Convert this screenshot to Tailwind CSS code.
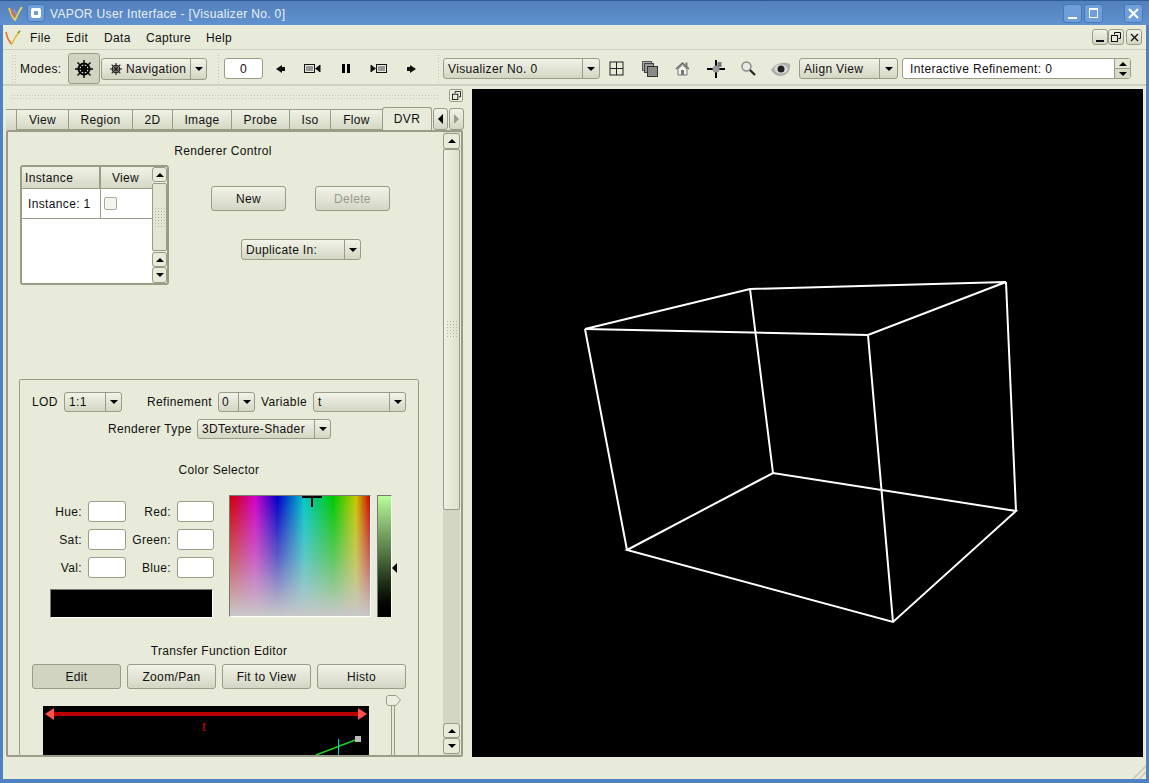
<!DOCTYPE html>
<html lang="en">
<head>
  <meta charset="utf-8" />
  <meta name="viewport" content="width=device-width, initial-scale=1" />
  <title>VAPOR User Interface</title>
  <script src="https://cdn.jsdelivr.net/npm/@tailwindcss/browser@4"></script>
</head>
<body class="bg-[#5a8cc6]">
<div class="w-[1149px] h-[783px] flex flex-col overflow-hidden font-['Liberation_Sans',Arial,sans-serif] text-[12px] leading-[14px] tracking-[0.35px] text-[#111] bg-[#4f82c2]">

  <!-- title bar -->
  <div class="h-[25px] shrink-0 flex items-center pl-[8px] pr-[6px] border-t border-[#2f5c96] bg-linear-to-b from-[#5280ba] to-[#6092d0]">
    <svg width="15" height="15" viewBox="0 0 15 15" fill="none"><path d="M1 2 C3 8 5 12 7 14 C9 10 11 5 14 1" stroke="#e8d060" stroke-width="2"/><path d="M3 3 C4 7 6 10 7 11" stroke="#d8703c" stroke-width="2"/><path d="M5 4 L9 8" stroke="#8a90c8" stroke-width="2.500"/></svg>
    <div class="ml-[4px] w-[18px] h-[18px] rounded-[3px] bg-[#6f9fda] border border-[#4a7ab5] flex items-center justify-center">
      <div class="w-[10px] h-[10px] rounded-[2px] border-[3px] border-white"></div>
    </div>
    <span class="ml-[5px] mt-[1px] text-[#eaf0f8]">VAPOR User Interface - [Visualizer No. 0]</span>
    <div class="ml-auto flex items-center">
      <div class="w-[19px] h-[19px] rounded-[3px] bg-[#6f9fda] border border-[#4a7ab5] flex items-end justify-center pb-[3px]"><div class="w-[9px] h-[2px] bg-white"></div></div>
      <div class="ml-[2px] w-[19px] h-[19px] rounded-[3px] bg-[#6f9fda] border border-[#4a7ab5] flex items-center justify-center"><div class="w-[9px] h-[10px] border border-white border-t-2"></div></div>
      <div class="ml-[21px] w-[19px] h-[19px] rounded-[3px] bg-[#6f9fda] border border-[#4a7ab5] flex items-center justify-center">
        <svg width="11" height="11" viewBox="0 0 11 11"><path d="M1 1 L10 10 M10 1 L1 10" stroke="white" stroke-width="2.2"/></svg>
      </div>
    </div>
  </div>

  <div class="flex-1 mx-[3px] mb-[4px] bg-[#e8ebd9] flex flex-col min-h-0">
    <!-- menu bar -->
    <div class="h-[25px] shrink-0 flex items-center border-b border-[#cfd1c0] pl-[2px] pr-[4px]">
      <svg width="16" height="15" viewBox="0 0 16 15" fill="none"><path d="M1 2 C2 7 4 12 7 14" stroke="#e8742c" stroke-width="1.6"/><path d="M7 14 C9 10 11 5 15 1" stroke="#d8c030" stroke-width="1.6"/><path d="M13 3 L15 1" stroke="#50a040" stroke-width="1.6"/></svg>
      <div class="ml-[9px] mt-[1px] flex text-[#111]">
        <span class="w-[36px]">File</span>
        <span class="w-[38px]">Edit</span>
        <span class="w-[42px]">Data</span>
        <span class="w-[60px]">Capture</span>
        <span>Help</span>
      </div>
      <div class="ml-auto flex">
        <div class="w-[16px] h-[16px] rounded-[3px] border border-[#9a9c88] bg-linear-to-b from-[#f2f3e8] to-[#d4d6c4] flex items-end justify-center pb-[2px]"><div class="w-[8px] h-[2px] bg-[#111]"></div></div>
        <div class="w-[16px] h-[16px] rounded-[3px] border border-[#9a9c88] bg-linear-to-b from-[#f2f3e8] to-[#d4d6c4] flex items-center justify-center">
          <svg width="10" height="10" viewBox="0 0 10 10" fill="none" stroke="#111"><path d="M3.5 2.5 V0.5 H9.5 V6.5 H7.5"/><rect x="0.5" y="3.5" width="6" height="6" fill="#e8ebd9"/></svg>
        </div>
        <div class="ml-[2px] w-[16px] h-[16px] rounded-[3px] border border-[#9a9c88] bg-linear-to-b from-[#f2f3e8] to-[#d4d6c4] flex items-center justify-center">
          <svg width="9" height="9" viewBox="0 0 9 9"><path d="M1 1 L8 8 M8 1 L1 8" stroke="#111" stroke-width="1.3"/></svg>
        </div>
      </div>
    </div>

    <!-- toolbar -->
    <div class="h-[36px] shrink-0 flex items-center pt-[3px] border-b-2 border-[#cfd1c0]">
      <div class="ml-[8px] w-[5px] h-[30px] bg-[radial-gradient(#c4c6b2_1px,transparent_1px)] bg-[size:3px_3px]"></div>
      <span class="ml-[4px] w-[48px]">Modes:</span>
      <div class="w-[32px] h-[31px] rounded-[3px] border border-[#9a9c88] bg-[#d2d4c2] flex items-center justify-center">
        <svg width="18" height="18" viewBox="0 0 18 18" fill="none" stroke="#000" stroke-width="1.4"><path d="M9 0 V18 M0 9 H18 M2.5 2.5 L15.5 15.5 M15.5 2.5 L2.5 15.5"/><circle cx="9" cy="9" r="5.500" stroke-width="2"/><circle cx="9" cy="9" r="2.500" fill="#000"/></svg>
      </div>
      <div class="ml-[1px] w-[106px] h-[22px] flex rounded-[3px] border border-[#9a9c88] bg-linear-to-b from-[#f2f3e8] to-[#d4d6c4]">
        <div class="flex-1 flex items-center pl-[8px]">
          <svg width="12" height="12" viewBox="0 0 18 18" fill="none" stroke="#222" stroke-width="1.6"><path d="M9 0 V18 M0 9 H18 M2.5 2.5 L15.5 15.5 M15.5 2.5 L2.5 15.5"/><circle cx="9" cy="9" r="5.500" stroke-width="2"/></svg>
          <span class="ml-[4px]">Navigation</span>
        </div>
        <div class="w-[16px] border-l border-[#9a9c88] flex items-center justify-center"><div class="w-0 h-0 border-x-[4px] border-x-transparent border-t-[4px] border-t-black"></div></div>
      </div>
      <div class="ml-[10px] w-[4px] h-[30px] bg-[radial-gradient(#c4c6b2_1px,transparent_1px)] bg-[size:3px_3px]"></div>
      <div class="ml-[3px] w-[39px] h-[21px] rounded-[3px] border border-[#9a9c88] bg-white flex items-center justify-center">0</div>
      <!-- animation controls -->
      <div class="w-[33px] flex justify-center"><svg class="ml-[2px]" width="9" height="8" viewBox="0 0 9 8"><path d="M0 4 L6 0 V2 H9 V6 H6 V8 Z" fill="#111"/></svg></div>
      <div class="w-[33px] flex justify-center"><svg width="17" height="9" viewBox="0 0 17 9" fill="none"><rect x="0.5" y="0.5" width="10" height="8" stroke="#111"/><path d="M2 2 H9 V7 H2 Z" fill="#999"/><path d="M11 4.5 L15 1.5 V7.5 Z M15 1 H16.5 V8 H15 Z" fill="#111"/></svg></div>
      <div class="w-[33px] flex justify-center"><div class="w-[8px] h-[9px] border-x-[3px] border-black"></div></div>
      <div class="w-[33px] flex justify-center"><svg width="17" height="9" viewBox="0 0 17 9" fill="none"><rect x="6.5" y="0.5" width="10" height="8" stroke="#111"/><path d="M8 2 H15 V7 H8 Z" fill="#999"/><path d="M6 4.5 L2 1.5 V7.5 Z M0.5 1 H2 V8 H0.5 Z" fill="#111"/></svg></div>
      <div class="w-[33px] flex justify-center"><svg width="9" height="8" viewBox="0 0 9 8"><path d="M9 4 L3 0 V2 H0 V6 H3 V8 Z" fill="#111"/></svg></div>
      <div class="ml-[9px] w-[4px] h-[30px] bg-[radial-gradient(#c4c6b2_1px,transparent_1px)] bg-[size:3px_3px]"></div>
      <div class="ml-[2px] w-[157px] h-[21px] flex rounded-[3px] border border-[#9a9c88] bg-linear-to-b from-[#f2f3e8] to-[#d4d6c4]">
        <div class="flex-1 flex items-center pl-[4px]">Visualizer No. 0</div>
        <div class="w-[17px] border-l border-[#9a9c88] flex items-center justify-center"><div class="w-0 h-0 border-x-[4px] border-x-transparent border-t-[4px] border-t-black"></div></div>
      </div>
      <!-- view tools -->
      <div class="ml-[9px] w-[33px] flex">
        <svg width="15" height="15" viewBox="0 0 15 15" fill="none" stroke="#222"><rect x="1" y="1" width="13" height="13"/><path d="M7.5 1 V14 M1 7.5 H14"/></svg>
      </div>
      <div class="w-[33px] flex">
        <svg width="16" height="16" viewBox="0 0 16 16"><rect x="0.5" y="0.5" width="9" height="9" fill="#aaa" stroke="#555"/><rect x="2.5" y="2.5" width="9" height="9" fill="#999" stroke="#444"/><rect x="5.5" y="5.5" width="10" height="10" fill="#8a8a86" stroke="#333"/></svg>
      </div>
      <div class="w-[33px] flex">
        <svg width="15" height="15" viewBox="0 0 15 15"><path d="M1 8 L7.5 2 L14 8" fill="none" stroke="#666" stroke-width="1.6"/><path d="M3 8 V14 H12 V8 L7.5 4 Z" fill="#f4f4ec" stroke="#777"/><rect x="6" y="9" width="3" height="5" fill="#777"/><rect x="10.500" y="1.500" width="2" height="4" fill="#777"/></svg>
      </div>
      <div class="w-[33px] flex -ml-[1px] mr-[1px]">
        <svg width="18" height="18" viewBox="0 0 18 18"><path d="M9 0 V18 M0 9 H18" stroke="#000" stroke-width="2"/><circle cx="9" cy="9" r="3.500" fill="#999"/><rect x="10.500" y="2" width="4" height="5" fill="#777"/></svg>
      </div>
      <div class="w-[33px] flex">
        <svg width="15" height="15" viewBox="0 0 15 15"><circle cx="5.500" cy="5.500" r="4.500" fill="#e8e8e4" stroke="#888" stroke-width="1.4"/><path d="M9 9 L14 14" stroke="#222" stroke-width="2.2"/></svg>
      </div>
      <div class="w-[28px] flex -ml-[3px]">
        <svg width="20" height="16" viewBox="0 0 20 16"><path d="M0 9 C4 2 13 0 19 3 C20 9 16 15 9 15 C5 15 2 12 0 9 Z" fill="#b0b0aa"/><ellipse cx="10" cy="8" rx="6.500" ry="4.500" fill="#dcdcd8"/><circle cx="10" cy="8" r="3.500" fill="#222"/></svg>
      </div>
      <div class="w-[99px] h-[21px] flex rounded-[3px] border border-[#9a9c88] bg-linear-to-b from-[#f2f3e8] to-[#d4d6c4]">
        <div class="flex-1 flex items-center pl-[4px]">Align View</div>
        <div class="w-[18px] border-l border-[#9a9c88] flex items-center justify-center"><div class="w-0 h-0 border-x-[4px] border-x-transparent border-t-[4px] border-t-black"></div></div>
      </div>
      <div class="ml-[4px] w-[229px] h-[21px] flex rounded-[3px] border border-[#9a9c88] bg-white">
        <div class="flex-1 flex items-center pl-[7px]">Interactive Refinement: 0</div>
        <div class="w-[16px] border-l border-[#9a9c88] flex flex-col">
          <div class="flex-1 bg-[#e4e6d4] border-b border-[#9a9c88] flex items-center justify-center"><div class="w-0 h-0 border-x-[4px] border-x-transparent border-b-[4px] border-b-black"></div></div>
          <div class="flex-1 bg-[#d8dac8] flex items-center justify-center"><div class="w-0 h-0 border-x-[4px] border-x-transparent border-t-[4px] border-t-black"></div></div>
        </div>
      </div>
    </div>

    <!-- dock and visualizer -->
    <div class="flex-1 flex min-h-0">
      <div class="w-[466px] shrink-0 flex flex-col">
        <div class="h-[21px] shrink-0 flex items-start">
          <div class="ml-[7px] mt-[8px] w-[430px] h-[5px] bg-[radial-gradient(#c4c6b2_1px,transparent_1px)] bg-[size:3px_3px]"></div>
          <div class="ml-[9px] mt-[3px] w-[14px] h-[13px] rounded-[2px] border border-[#9a9c88] bg-[#eceee0] flex items-center justify-center">
            <svg width="9" height="9" viewBox="0 0 10 10" fill="none" stroke="#111"><path d="M3.5 2.5 V0.5 H9.5 V6.5 H7.5"/><rect x="0.5" y="3.5" width="6" height="6" fill="#e8ebd9"/></svg>
          </div>
        </div>
        <!-- tabs -->
        <div class="h-[23px] shrink-0 flex items-end pl-[3px]">
          <div class="w-[11px] h-[21px] border-t border-r border-[#9a9c88] bg-linear-to-b from-[#eef0e2] to-[#d4d6c4]"></div>
          <div class="w-[52px] h-[21px] flex items-center justify-center border-t border-r border-b border-[#9a9c88] bg-linear-to-b from-[#f0f2e4] to-[#d6d8c6]">View</div>
          <div class="w-[64px] h-[21px] flex items-center justify-center border-t border-r border-b border-[#9a9c88] bg-linear-to-b from-[#f0f2e4] to-[#d6d8c6]">Region</div>
          <div class="w-[40px] h-[21px] flex items-center justify-center border-t border-r border-b border-[#9a9c88] bg-linear-to-b from-[#f0f2e4] to-[#d6d8c6]">2D</div>
          <div class="w-[59px] h-[21px] flex items-center justify-center border-t border-r border-b border-[#9a9c88] bg-linear-to-b from-[#f0f2e4] to-[#d6d8c6]">Image</div>
          <div class="w-[58px] h-[21px] flex items-center justify-center border-t border-r border-b border-[#9a9c88] bg-linear-to-b from-[#f0f2e4] to-[#d6d8c6]">Probe</div>
          <div class="w-[41px] h-[21px] flex items-center justify-center border-t border-r border-b border-[#9a9c88] bg-linear-to-b from-[#f0f2e4] to-[#d6d8c6]">Iso</div>
          <div class="w-[51px] h-[21px] flex items-center justify-center border-t border-b border-[#9a9c88] bg-linear-to-b from-[#f0f2e4] to-[#d6d8c6]">Flow</div>
          <div class="w-[50px] h-[23px] flex items-center justify-center rounded-t-[3px] border border-b-0 border-[#9a9c88] bg-[#e8ebd9]">DVR</div>
          <div class="ml-[1px] w-[15px] h-[22px] rounded-[3px] border border-[#9a9c88] bg-linear-to-b from-[#f2f3e8] to-[#d4d6c4] flex items-center justify-center"><div class="w-0 h-0 border-y-[5px] border-y-transparent border-r-[5px] border-r-black"></div></div>
          <div class="ml-[1px] w-[15px] h-[22px] rounded-[3px] border border-[#9a9c88] bg-linear-to-b from-[#f2f3e8] to-[#d4d6c4] flex items-center justify-center"><div class="w-0 h-0 border-y-[5px] border-y-transparent border-l-[5px] border-l-[#9a9c88]"></div></div>
        </div>
        <!-- panel -->
        <div class="ml-[3px] w-[457px] flex-1 min-h-0 flex border-2 border-[#9a9c88] rounded-[2px] overflow-hidden">
          <div class="w-[435px] shrink-0 overflow-hidden">
            <div class="mt-[12px] w-[430px] h-[14px] text-center">Renderer Control</div>
            <div class="mt-[7px] pl-[12px] flex">
              <!-- instance table -->
              <div class="w-[149px] h-[120px] rounded-[3px] border-2 border-[#9a9c88] bg-white flex">
                <div class="w-[130px]">
                  <div class="flex h-[22px] border-b border-[#9a9c88] bg-linear-to-b from-[#f0f2e4] to-[#d6d8c6]">
                    <div class="w-[79px] border-r-2 border-[#9a9c88] flex items-center pl-[3px]">Instance</div>
                    <div class="flex-1 flex items-center justify-center pr-[2px]">View</div>
                  </div>
                  <div class="flex h-[30px] border-b border-[#9a9c88]">
                    <div class="w-[79px] border-r border-[#9a9c88] flex items-center pl-[6px]">Instance: 1</div>
                    <div class="flex-1 flex items-center pl-[3px]"><div class="w-[13px] h-[13px] rounded-[2px] border border-[#a8aa98] bg-[#f5f5ef]"></div></div>
                  </div>
                </div>
                <div class="w-[15px] flex flex-col bg-[#e8ebd9]">
                  <div class="h-[15px] rounded-[3px] border border-[#9a9c88] bg-[#e8ebd9] flex items-center justify-center"><div class="w-0 h-0 border-x-[4px] border-x-transparent border-b-[4px] border-b-black"></div></div>
                  <div class="h-[68px] mt-[1px] rounded-[2px] border border-[#9a9c88] bg-[#e4e6d4] flex items-center justify-center"><div class="w-[11px] h-[20px] bg-[radial-gradient(#b4b6a2_1px,transparent_1px)] bg-[size:3px_3px]"></div></div>
                  <div class="h-[15px] mt-[1px] rounded-[3px] border border-[#9a9c88] flex items-center justify-center"><div class="w-0 h-0 border-x-[4px] border-x-transparent border-b-[4px] border-b-black"></div></div>
                  <div class="h-[16px] rounded-[3px] border border-[#9a9c88] flex items-center justify-center"><div class="w-0 h-0 border-x-[4px] border-x-transparent border-t-[4px] border-t-black"></div></div>
                </div>
              </div>
              <div class="ml-[42px]">
                <div class="mt-[21px] flex gap-[29px]">
                  <div class="w-[75px] h-[25px] rounded-[3px] border border-[#9a9c88] bg-linear-to-b from-[#f2f3e8] to-[#d4d6c4] flex items-center justify-center">New</div>
                  <div class="w-[75px] h-[25px] rounded-[3px] border border-[#9a9c88] bg-linear-to-b from-[#f2f3e8] to-[#d4d6c4] flex items-center justify-center text-[#999a8c]">Delete</div>
                </div>
                <div class="mt-[28px] ml-[30px] w-[120px] h-[21px] flex rounded-[3px] border border-[#9a9c88] bg-linear-to-b from-[#f2f3e8] to-[#d4d6c4]">
                  <div class="flex-1 flex items-center pl-[4px]">Duplicate In:</div>
                  <div class="w-[16px] border-l border-[#9a9c88] flex items-center justify-center"><div class="w-0 h-0 border-x-[4px] border-x-transparent border-t-[4px] border-t-black"></div></div>
                </div>
              </div>
            </div>

            <!-- group box -->
            <div class="mt-[94px] ml-[11px] w-[400px] h-[400px] border border-[#9a9c88] rounded-[2px] pt-[12px]">
              <div class="flex items-center h-[20px] pl-[12px]">
                <span class="w-[32px]">LOD</span>
                <div class="w-[58px] h-[20px] flex rounded-[3px] border border-[#9a9c88] bg-linear-to-b from-[#f2f3e8] to-[#d4d6c4]">
                  <div class="flex-1 flex items-center pl-[4px]">1:1</div>
                  <div class="w-[16px] border-l border-[#9a9c88] flex items-center justify-center"><div class="w-0 h-0 border-x-[4px] border-x-transparent border-t-[4px] border-t-black"></div></div>
                </div>
                <span class="ml-[25px] w-[71px]">Refinement</span>
                <div class="w-[37px] h-[20px] flex rounded-[3px] border border-[#9a9c88] bg-linear-to-b from-[#f2f3e8] to-[#d4d6c4]">
                  <div class="flex-1 flex items-center pl-[3px]">0</div>
                  <div class="w-[16px] border-l border-[#9a9c88] flex items-center justify-center"><div class="w-0 h-0 border-x-[4px] border-x-transparent border-t-[4px] border-t-black"></div></div>
                </div>
                <span class="ml-[6px] w-[52px]">Variable</span>
                <div class="w-[93px] h-[20px] flex rounded-[3px] border border-[#9a9c88] bg-linear-to-b from-[#f2f3e8] to-[#d4d6c4]">
                  <div class="flex-1 flex items-center pl-[4px]">t</div>
                  <div class="w-[16px] border-l border-[#9a9c88] flex items-center justify-center"><div class="w-0 h-0 border-x-[4px] border-x-transparent border-t-[4px] border-t-black"></div></div>
                </div>
              </div>
              <div class="mt-[7px] flex items-center h-[20px] pl-[88px]">
                <span class="w-[89px]">Renderer Type</span>
                <div class="w-[134px] h-[20px] flex rounded-[3px] border border-[#9a9c88] bg-linear-to-b from-[#f2f3e8] to-[#d4d6c4]">
                  <div class="flex-1 flex items-center pl-[4px]">3DTexture-Shader</div>
                  <div class="w-[16px] border-l border-[#9a9c88] flex items-center justify-center"><div class="w-0 h-0 border-x-[4px] border-x-transparent border-t-[4px] border-t-black"></div></div>
                </div>
              </div>

              <div class="mt-[24px] h-[14px] text-center">Color Selector</div>
              <div class="mt-[18px] flex">
                <div class="w-[209px] pt-[6px]">
                  <div class="flex items-center h-[21px]">
                    <span class="w-[62px] text-right">Hue:</span>
                    <div class="ml-[6px] w-[38px] h-[21px] rounded-[3px] border border-[#9a9c88] bg-white"></div>
                    <span class="w-[45px] text-right">Red:</span>
                    <div class="ml-[6px] w-[37px] h-[21px] rounded-[3px] border border-[#9a9c88] bg-white"></div>
                  </div>
                  <div class="mt-[7px] flex items-center h-[21px]">
                    <span class="w-[62px] text-right">Sat:</span>
                    <div class="ml-[6px] w-[38px] h-[21px] rounded-[3px] border border-[#9a9c88] bg-white"></div>
                    <span class="w-[45px] text-right">Green:</span>
                    <div class="ml-[6px] w-[37px] h-[21px] rounded-[3px] border border-[#9a9c88] bg-white"></div>
                  </div>
                  <div class="mt-[7px] flex items-center h-[21px]">
                    <span class="w-[62px] text-right">Val:</span>
                    <div class="ml-[6px] w-[38px] h-[21px] rounded-[3px] border border-[#9a9c88] bg-white"></div>
                    <span class="w-[45px] text-right">Blue:</span>
                    <div class="ml-[6px] w-[37px] h-[21px] rounded-[3px] border border-[#9a9c88] bg-white"></div>
                  </div>
                  <div class="mt-[11px] ml-[30px] w-[163px] h-[29px] bg-black border-t border-l border-t-[#777] border-l-[#777] border-r border-b border-r-white border-b-white"></div>
                </div>
                <!-- hue and saturation box -->
                <div class="relative w-[142px] h-[122px] overflow-hidden border-t border-l border-r border-b border-t-[#777] border-l-[#777] border-r-white border-b-white bg-[linear-gradient(to_bottom,rgba(200,200,200,0),rgba(200,200,200,0.45)_50%,rgba(200,200,200,1)),linear-gradient(to_right,#d00000,#d000c8_18%,#0000c8_34%,#00c8c8_53%,#00c800_74%,#c8c800_90%,#d00000)]">
                  <div class="absolute left-[72px] top-0 w-[20px] h-[2px] bg-black"></div>
                  <div class="absolute left-[81px] top-0 w-[2px] h-[11px] bg-black"></div>
                </div>
                <div class="relative ml-[6px] w-[15px] h-[122px] border-t border-l border-r border-t-[#777] border-l-[#777] border-r-white bg-linear-to-b from-[#b8ff9c] via-[#4f7040] to-black">
                  <div class="absolute left-[14px] top-[67px] w-0 h-0 border-y-[5px] border-y-transparent border-r-[5px] border-r-black"></div>
                </div>
              </div>

              <div class="mt-[26px] h-[14px] text-center">Transfer Function Editor</div>
              <div class="mt-[6px] pl-[12px] flex gap-[6px]">
                <div class="w-[89px] h-[25px] rounded-[3px] border border-[#9a9c88] bg-[#d2d4c2] flex items-center justify-center">Edit</div>
                <div class="w-[89px] h-[25px] rounded-[3px] border border-[#9a9c88] bg-linear-to-b from-[#f2f3e8] to-[#d4d6c4] flex items-center justify-center">Zoom/Pan</div>
                <div class="w-[89px] h-[25px] rounded-[3px] border border-[#9a9c88] bg-linear-to-b from-[#f2f3e8] to-[#d4d6c4] flex items-center justify-center">Fit to View</div>
                <div class="w-[89px] h-[25px] rounded-[3px] border border-[#9a9c88] bg-linear-to-b from-[#f2f3e8] to-[#d4d6c4] flex items-center justify-center">Histo</div>
              </div>
              <div class="mt-[17px] ml-[23px] flex">
                <svg width="326" height="60" viewBox="0 0 326 60" class="bg-black block">
                  <rect x="8" y="6" width="310" height="4" fill="#b80000"/>
                  <path d="M2 8 L11 2 V14 Z M324 8 L315 2 V14 Z" fill="#ff5050"/>
                  <text x="161" y="25" font-size="12" fill="#e00000" text-anchor="middle" font-family="Liberation Sans">t</text>
                  <path d="M273 49 L315 33" stroke="#20d020" stroke-width="1.5"/>
                  <path d="M295.500 33 V60" stroke="#00d0d0" stroke-width="1"/>
                  <rect x="312" y="30" width="6" height="6" fill="#bbb"/>
                </svg>
                <div class="ml-[17px] -mt-[11px] w-[15px] flex flex-col items-center">
                  <svg width="15" height="11" viewBox="0 0 15 11" class="block"><path d="M0.5 2 L2 0.5 H10 L14.500 5 L10 10.500 H2 L0.5 9 Z" fill="#eceee0" stroke="#9a9c88"/></svg>
                  <div class="-ml-[1px] w-[4px] h-[60px] border-x border-[#9a9c88]"></div>
                </div>
              </div>
            </div>
          </div>
          <!-- panel scrollbar -->
          <div class="w-[17px] shrink-0 pt-[1px] flex flex-col bg-[radial-gradient(#d4d6c4_1px,transparent_1px)] bg-[size:2px_2px]">
            <div class="h-[16px] rounded-[3px] border border-[#9a9c88] bg-[#e8ebd9] flex items-center justify-center"><div class="w-0 h-0 border-x-[4px] border-x-transparent border-b-[4px] border-b-black"></div></div>
            <div class="h-[361px] rounded-[2px] border border-[#9a9c88] bg-linear-to-r from-[#eef0e2] to-[#dee0ce] flex items-center justify-center"><div class="w-[11px] h-[19px] bg-[radial-gradient(#b4b6a2_1px,transparent_1px)] bg-[size:3px_3px]"></div></div>
            <div class="mt-auto h-[15px] rounded-[3px] border border-[#9a9c88] bg-[#e8ebd9] flex items-center justify-center"><div class="w-0 h-0 border-x-[4px] border-x-transparent border-b-[4px] border-b-black"></div></div>
            <div class="h-[16px] mb-[1px] rounded-[3px] border border-[#9a9c88] bg-[#e8ebd9] flex items-center justify-center"><div class="w-0 h-0 border-x-[4px] border-x-transparent border-t-[4px] border-t-black"></div></div>
          </div>
        </div>
      </div>

      <!-- visualizer canvas -->
      <div class="ml-[3px] mt-[3px] w-[671px] bg-black">
        <svg width="671" height="668" viewBox="472 89 671 668" fill="none" stroke="white" stroke-width="2" class="block">
          <path d="M585 329 L750 289 L1006 282 L868 335 Z"/>
          <path d="M627 550 L773 473 L1016 511 L893 622 Z"/>
          <path d="M585 329 L627 550 M750 289 L773 473 M1006 282 L1016 511 M868 335 L893 622"/>
        </svg>
      </div>
    </div>

    <!-- status bar -->
    <div class="h-[22px] shrink-0 flex justify-end items-end">
      <div class="w-[14px] h-[14px] bg-[linear-gradient(135deg,transparent_50%,#d0d2be_50%,#d0d2be_60%,transparent_60%,transparent_70%,#d0d2be_70%,#d0d2be_80%,transparent_80%)]"></div>
    </div>
  </div>
</div>
</body>
</html>
